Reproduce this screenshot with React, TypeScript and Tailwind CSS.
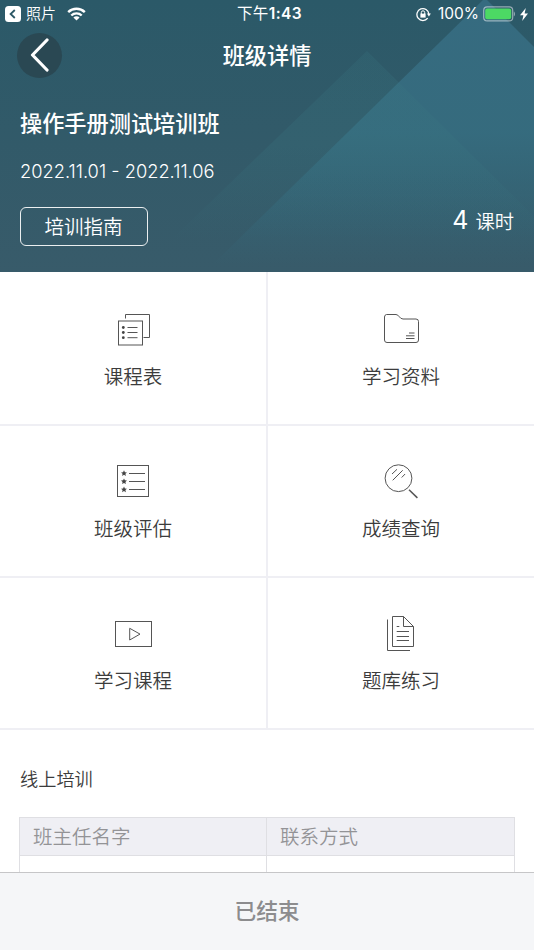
import React from 'react';

interface MenuItem {
    label: string;
    icon: React.ReactNode;
}

const star = 'm0-2.9.9 1.9 2.1.2-1.6 1.4.5 2.1-1.9-1.1-1.9 1.1.5-2.1L-3-.8l2.1-.2z';

const menuItems: MenuItem[] = [
    {
        label: '课程表',
        icon: (
            <>
                <path d="M12.5 9.5v-4h24v23h-6" />
                <rect x="5.5" y="12" width="24" height="24" />
                <path d="M14.5 18.5h10M14.5 23.5h10M14.5 28.7h10" />
                <g fill="#444" stroke="none">
                    <circle cx="10.3" cy="18.5" r="1.4" />
                    <circle cx="10.3" cy="23.5" r="1.4" />
                    <circle cx="10.3" cy="28.7" r="1.4" />
                </g>
            </>
        ),
    },
    {
        label: '学习资料',
        icon: (
            <>
                <path d="M5.5 5.5h9.5c3 0 3.5 4.5 7 4.5h13a2.5 2.5 0 0 1 2.5 2.5V31a2.5 2.5 0 0 1-2.5 2.5H6A2.5 2.5 0 0 1 3.5 31V8a2.5 2.5 0 0 1 2-2.5z" />
                <path d="M28 24h5.5M25 26.8h8.5M25 29.5h8.5" />
            </>
        ),
    },
    {
        label: '班级评估',
        icon: (
            <>
                <rect x="4.5" y="4.5" width="31" height="31" />
                <path d="M16 12.5h16M16 20.5h16M16 28.5h16" />
                <g fill="#444" stroke="none">
                    <path transform="translate(11 12.2)" d={star} />
                    <path transform="translate(11 20.3)" d={star} />
                    <path transform="translate(11 28.5)" d={star} />
                </g>
            </>
        ),
    },
    {
        label: '成绩查询',
        icon: (
            <>
                <circle cx="17.5" cy="17.2" r="13.4" />
                <path d="m11 13 5-4.7M11.7 19.3l10-10M20.7 16.5l3.4-3.5" />
                <path d="m28 28.7 8.4 8.2" strokeWidth="1.5" />
            </>
        ),
    },
    {
        label: '学习课程',
        icon: (
            <>
                <rect x="2.5" y="8.5" width="36" height="25" />
                <path d="M16.7 15.3V27L27 21.1z" />
            </>
        ),
    },
    {
        label: '题库练习',
        icon: (
            <>
                <path d="M11.5 3.5h11l10 10v20h-21z" />
                <path d="M22.5 3.5v10h10" />
                <path d="M15.7 13.5h2.6M15.7 18.5H28M15.7 23.5H28M15.7 27.5H28" />
                <path d="M6.5 6.5v31H29" />
            </>
        ),
    },
];

function StatusBar() {
    return (
        <div className="grid h-7 grid-cols-3 items-center pr-[6px] pl-[5px] text-[15px]">
            <div className="flex items-center">
                <svg width="16" height="16" viewBox="0 0 16 16">
                    <rect width="16" height="16" rx="3.5" fill="#fff" />
                    <path d="M9.8 4 5.6 8l4.2 4" fill="none" stroke="#2c5866" strokeWidth="1.8" />
                </svg>
                <span className="ml-[5px] font-[350]">照片</span>
                <svg className="ml-[11px]" width="19" height="14" viewBox="0 0 19 14" fill="none" stroke="#fff" strokeWidth="2.4">
                    <path d="M1.2 5.2a11.8 11.8 0 0 1 16.6 0" />
                    <path d="M4.3 8.5a7.4 7.4 0 0 1 10.4 0" />
                    <path d="M9.5 13.6 6.4 10.6a4.4 4.4 0 0 1 6.2 0z" fill="#fff" stroke="none" />
                </svg>
            </div>
            <div className="pl-[6px] text-center text-[15.5px] tracking-[0.4px] whitespace-nowrap">
                下午<span className="font-semibold">1:43</span>
            </div>
            <div className="flex items-center justify-end">
                <svg width="15" height="15" viewBox="0 0 15 15" fill="none" stroke="#fff" strokeWidth="1.3">
                    <path d="M11.7 11.2A6 6 0 1 1 12.9 7" />
                    <path d="M10.9 6.6h4l-2 2.8z" fill="#fff" stroke="none" />
                    <rect x="4.4" y="6.6" width="5.2" height="4" fill="#fff" stroke="none" />
                    <path d="M5.3 7V5.5a1.7 1.7 0 0 1 3.4 0V7" strokeWidth="1" />
                </svg>
                <span className="ml-[7px] text-[15.5px]">100%</span>
                <svg className="ml-1" width="32" height="16" viewBox="0 0 32 16">
                    <rect x="0.7" y="0.9" width="29" height="14" rx="3.5" fill="none" stroke="#fff" strokeOpacity="0.5" strokeWidth="1.2" />
                    <rect x="2.2" y="2.6" width="26" height="10.6" rx="2" fill="#4cd964" />
                    <path d="M30.8 5.6v4.8c1.5-.6 1.5-4.2 0-4.8z" fill="#fff" fillOpacity="0.5" />
                </svg>
                <svg className="ml-[5px]" width="8" height="13" viewBox="0 0 8 13" fill="#fff">
                    <path d="M5.8 0 0 7.3h3.4L2.2 13 8 5.4H4.6z" />
                </svg>
            </div>
        </div>
    );
}

function HeaderBackdrop() {
    return (
        <svg className="absolute inset-0 -z-10" width="534" height="272" viewBox="0 0 534 272">
            <defs>
                <linearGradient id="base" x1="0" y1="0" x2="0" y2="1">
                    <stop offset="0" stopColor="#2b5968" />
                    <stop offset="1" stopColor="#385b6a" />
                </linearGradient>
                <linearGradient id="peak" gradientUnits="userSpaceOnUse" x1="0" y1="0" x2="0" y2="265">
                    <stop offset="0" stopColor="#366b80" />
                    <stop offset="0.5" stopColor="#366d80" stopOpacity="0.9" />
                    <stop offset="1" stopColor="#366d80" stopOpacity="0" />
                </linearGradient>
                <linearGradient id="hill" gradientUnits="userSpaceOnUse" x1="0" y1="51" x2="0" y2="240">
                    <stop offset="0" stopColor="#397681" stopOpacity="0.22" />
                    <stop offset="0.5" stopColor="#397681" stopOpacity="0.25" />
                    <stop offset="1" stopColor="#397681" stopOpacity="0" />
                </linearGradient>
            </defs>
            <rect width="534" height="272" fill="url(#base)" />
            <path d="M485-2 205 272h329V47z" fill="url(#peak)" />
            <path d="M367 51 138 272h452z" fill="url(#hill)" />
        </svg>
    );
}

function Header() {
    return (
        <header className="relative isolate h-[272px] shrink-0 text-white">
            <HeaderBackdrop />
            <StatusBar />
            <div className="grid h-[54px] grid-cols-[1fr_auto_1fr] items-center px-[17px]">
                <button className="flex size-[45px] items-center justify-center rounded-full bg-[#2a4853]">
                    <svg width="20" height="34" viewBox="0 0 20 34" fill="none" stroke="#fff" strokeWidth="3.2" strokeLinecap="round" strokeLinejoin="round">
                        <path d="M17 2 2.5 17 17 32" />
                    </svg>
                </button>
                <h1 className="pt-px text-[22.2px] leading-8 font-medium">班级详情</h1>
            </div>
            <div className="flex items-end justify-between px-5 pt-[26px]">
                <div>
                    <h2 className="text-[22.2px] leading-8 font-medium">操作手册测试培训班</h2>
                    <p className="mt-[17px] text-[18.3px] leading-7 font-[350]">2022.11.01 - 2022.11.06</p>
                    <button className="mt-[22px] flex h-[39px] w-[128px] items-center justify-center rounded-[6px] border-[1.5px] border-white/90 pt-[2px] pr-px text-[19.5px] font-[350]">
                        培训指南
                    </button>
                </div>
                <div className="mb-[6px] flex items-baseline leading-9">
                    <span className="text-[25px]">4</span>
                    <span className="ml-[7px] text-[19.3px] font-[350]">课时</span>
                </div>
            </div>
        </header>
    );
}

export default function App() {
    return (
        <div className="flex h-[950px] w-[534px] flex-col overflow-hidden bg-white font-[Inter,'Noto_Sans_CJK_SC',sans-serif] text-[#3c3c3c]">
            <Header />

            <nav className="grid shrink-0 grid-cols-[268px_266px] grid-rows-[154px_152px_152px]">
                {menuItems.map((item) => (
                    <a key={item.label} className="flex flex-col items-center justify-end border-b-2 border-[#efeff4] pb-[33px] odd:border-r-2">
                        <svg width="40" height="40" viewBox="0 0 40 40" fill="none" stroke="#555">
                            {item.icon}
                        </svg>
                        <span className="mt-[14px] text-[19.5px] leading-7 font-[350]">{item.label}</span>
                    </a>
                ))}
            </nav>

            <section className="min-h-0 flex-1 overflow-hidden px-[19px] pt-[35px]">
                <h3 className="pl-px text-[18.2px] leading-7 font-[350]">线上培训</h3>
                <table className="mt-[24px] w-[496px] table-fixed border-collapse text-left text-[19.5px] text-[#939396]">
                    <thead>
                        <tr className="h-[38px] bg-[#efeff4]">
                            <th className="w-[247px] border border-[#dfdfe3] px-[13px] py-0 leading-9 font-[350]">班主任名字</th>
                            <th className="border border-[#dfdfe3] px-[13px] py-0 leading-9 font-[350]">联系方式</th>
                        </tr>
                    </thead>
                    <tbody>
                        <tr className="h-[38px]">
                            <td className="border border-[#dfdfe3]" />
                            <td className="border border-[#dfdfe3]" />
                        </tr>
                    </tbody>
                </table>
            </section>

            <footer className="flex h-[78px] shrink-0 items-center justify-center border-t border-[#c6c6c8] bg-[#f5f6f8] text-[21.7px] font-medium text-[#8c8c8e]">
                已结束
            </footer>
        </div>
    );
}
